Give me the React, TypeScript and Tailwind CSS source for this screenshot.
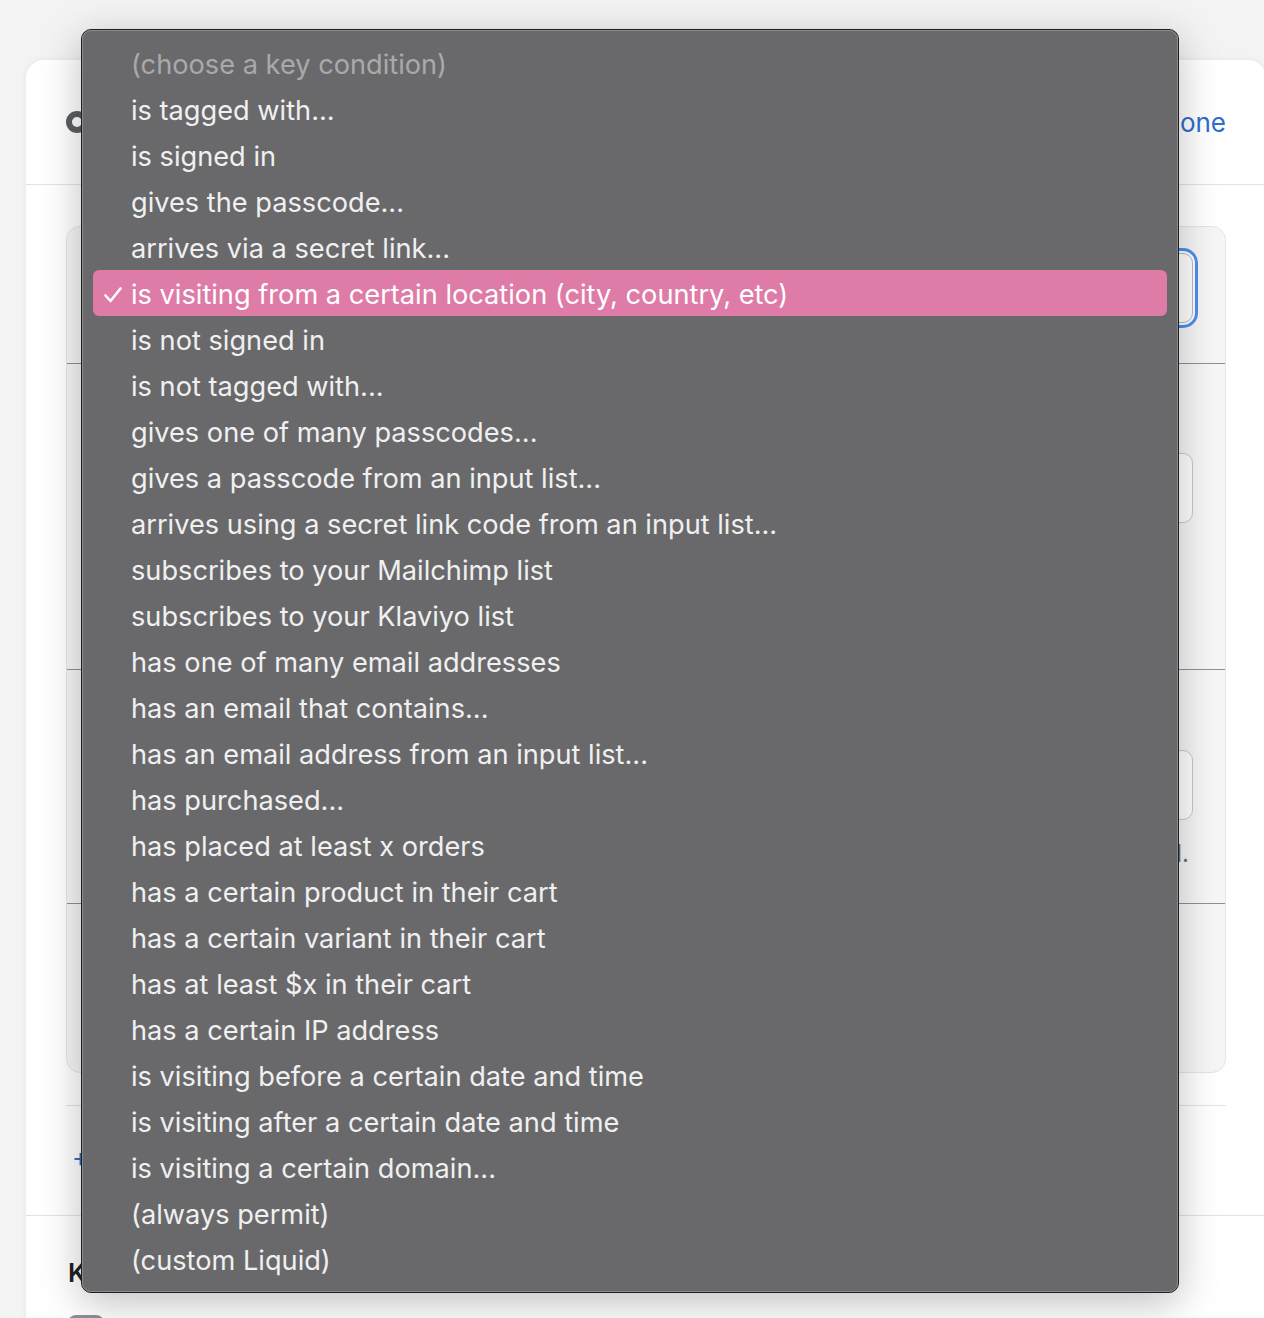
import React from 'react';

const options = [
  '(choose a key condition)',
  'is tagged with...',
  'is signed in',
  'gives the passcode...',
  'arrives via a secret link...',
  'is visiting from a certain location (city, country, etc)',
  'is not signed in',
  'is not tagged with...',
  'gives one of many passcodes...',
  'gives a passcode from an input list...',
  'arrives using a secret link code from an input list...',
  'subscribes to your Mailchimp list',
  'subscribes to your Klaviyo list',
  'has one of many email addresses',
  'has an email that contains...',
  'has an email address from an input list...',
  'has purchased...',
  'has placed at least x orders',
  'has a certain product in their cart',
  'has a certain variant in their cart',
  'has at least $x in their cart',
  'has a certain IP address',
  'is visiting before a certain date and time',
  'is visiting after a certain date and time',
  'is visiting a certain domain...',
  '(always permit)',
  '(custom Liquid)',
];

const selected = 5;

function SelectMenu() {
  return (
    <div className="absolute left-[81px] top-[29px] z-50 w-[1098px] h-[1264px] rounded-[10px] border border-[#1f1f1f] bg-[#69696b] shadow-[0_10px_40px_rgba(0,0,0,0.25)]">
      <div className="h-full rounded-[9px] border border-[#8a8a8c] pt-[9px] px-[10px]">
        {options.map((opt, i) => {
          const active = i === selected;
          return (
            <div
              key={opt}
              className={`flex h-[46px] items-center rounded-[6px] ${active ? 'bg-[#de7ba7]' : ''}`}
            >
              <span className="w-[38px] flex justify-center pl-[2px] pt-[3px] text-white">
                {active && (
                  <svg width="20" height="18" viewBox="0 0 20 18" fill="none">
                    <path d="M2.5 9.5 L7.5 15 L17.5 2.5" stroke="#fff" strokeWidth="2.6" strokeLinecap="round" strokeLinejoin="round" />
                  </svg>
                )}
              </span>
              <span className={`mt-[4px] text-[27.2px] leading-none ${i === 0 ? 'text-[#a9a9ab]' : active ? 'text-white' : 'text-[#f0f0f0]'}`}>
                {opt}
              </span>
            </div>
          );
        })}
      </div>
    </div>
  );
}

function FieldRow({ focused }: { focused?: boolean }) {
  return (
    <div
      className={`ml-[26px] mr-[32px] h-[70px] rounded-[10px] border bg-white ${focused ? 'border-[#bbbbbb] ring-[3px] ring-[#4d8ef7] ring-offset-[2px]' : 'border-[#c6c8cb]'}`}
    />
  );
}

export default function App() {
  return (
    <div
      className="relative min-h-[1318px] overflow-hidden bg-[#f3f3f3] text-[#202223]"
      style={{ fontFamily: 'Inter, "Noto Sans", sans-serif' }}
    >
      <SelectMenu />

      {/* Card behind the native menu */}
      <div className="ml-[26px] mt-[60px] w-[1240px] rounded-tl-[18px] rounded-tr-[18px] bg-white shadow-[0_0_6px_rgba(0,0,0,0.06)]">
        <div className="flex h-[125px] items-center justify-between border-b border-[#e1e3e5] px-[40px]">
          <div className="flex items-center gap-3">
            <span className="h-[22px] w-[22px] rounded-full border-[6px] border-[#5c5f62]" />
            <span className="text-[26px] font-semibold">Condition</span>
          </div>
          <span className="text-[26px] text-[#2c6ecb]">Done</span>
        </div>

        <div className="px-[40px] pt-[41px]">
          <div className="rounded-[14px] border border-[#e4e5e7] bg-[#f6f6f7]">
            <div className="h-[137px] border-b border-[#8c9196] pt-[26px]">
              <FieldRow focused />
            </div>
            <div className="h-[306px] border-b border-[#8c9196] pt-[89px]">
              <FieldRow />
            </div>
            <div className="h-[234px] border-b border-[#8c9196] pt-[80px]">
              <FieldRow />
              <p className="mt-[16px] mr-[32px] text-right text-[24px] text-[#6d7175] pr-[4px]">Leave blank to allow all.</p>
            </div>
            <div className="h-[168px]" />
          </div>

          <div className="mt-[32px] border-t border-[#e1e3e5] pt-[33px] pb-[37px]">
            <span className="ml-[6px] text-[26px] text-[#2c6ecb]">+ Add another condition</span>
          </div>
        </div>

        <div className="border-t border-[#e1e3e5] px-[42px] pt-[37px]">
          <p className="text-[26px] font-semibold">Keys</p>
          <div className="mt-[23px] h-[20px] w-[36px] rounded-t-[8px] bg-[#8c9196]" />
        </div>
      </div>
    </div>
  );
}
